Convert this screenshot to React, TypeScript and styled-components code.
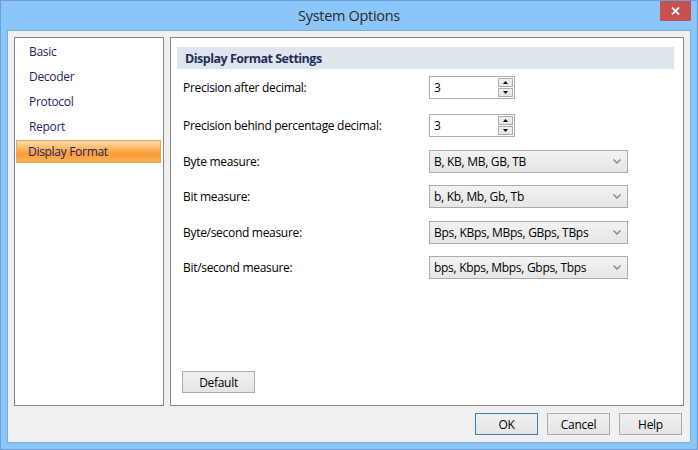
import React from "react";
import styled, { createGlobalStyle } from "styled-components";

const FONT = `"Segoe UI", "Open Sans", "Noto Sans", sans-serif`;

const GlobalStyle = createGlobalStyle`
  html, body {
    margin: 0;
    padding: 0;
    background: #ffffff;
  }
  body {
    font-family: ${FONT};
    font-size: 12px;
    letter-spacing: -0.3px;
  }
`;

const categories = ["Basic", "Decoder", "Protocol", "Report", "Display Format"];

const settings = [
  { label: "Precision after decimal:", kind: "spin", value: "3" },
  { label: "Precision behind percentage decimal:", kind: "spin", value: "3" },
  { label: "Byte measure:", kind: "combo", value: "B, KB, MB, GB, TB" },
  { label: "Bit measure:", kind: "combo", value: "b, Kb, Mb, Gb, Tb" },
  { label: "Byte/second measure:", kind: "combo", value: "Bps, KBps, MBps, GBps, TBps" },
  { label: "Bit/second measure:", kind: "combo", value: "bps, Kbps, Mbps, Gbps, Tbps" },
];

export default function App() {
  return (
    <>
      <GlobalStyle />
      <Window>
        <TitleBar>
          <Title>System Options</Title>
          <CloseButton>
            <svg width="9" height="8" viewBox="0 0 9 8">
              <path d="M1 0.5 L8 7.5 M8 0.5 L1 7.5" stroke="#fff" strokeWidth="1.8" />
            </svg>
          </CloseButton>
        </TitleBar>
        <Client>
          <Panels>
            <CategoryList>
              {categories.map((c) => (
                <CategoryItem key={c} $active={c === "Display Format"}>
                  {c}
                </CategoryItem>
              ))}
            </CategoryList>
            <SettingsPanel>
              <SectionHeader>Display Format Settings</SectionHeader>
              <Rows>
                {settings.map((s, i) => (
                  <Row key={s.label} $extra={i === 0}>
                    <Label>{s.label}</Label>
                    {s.kind === "spin" ? (
                      <SpinBox>
                        <SpinValue>{s.value}</SpinValue>
                        <SpinButtons>
                          <SpinButton>
                            <svg width="5" height="3" viewBox="0 0 5 3">
                              <path d="M2.5 0 L5 3 L0 3 Z" fill="#000" />
                            </svg>
                          </SpinButton>
                          <SpinButton>
                            <svg width="5" height="3" viewBox="0 0 5 3">
                              <path d="M0 0 L5 0 L2.5 3 Z" fill="#000" />
                            </svg>
                          </SpinButton>
                        </SpinButtons>
                      </SpinBox>
                    ) : (
                      <Combo>
                        <ComboText>{s.value}</ComboText>
                        <svg width="8" height="5" viewBox="0 0 8 5">
                          <path d="M0.5 0.5 L4 4 L7.5 0.5" stroke="#8a8a8a" strokeWidth="1.5" fill="none" />
                        </svg>
                      </Combo>
                    )}
                  </Row>
                ))}
              </Rows>
              <Footer>
                <Button $width={73}>Default</Button>
              </Footer>
            </SettingsPanel>
          </Panels>
          <ButtonRow>
            <Button $width={63} $default>OK</Button>
            <Button $width={63}>Cancel</Button>
            <Button $width={63}>Help</Button>
          </ButtonRow>
        </Client>
      </Window>
    </>
  );
}

const Window = styled.div`
  width: 698px;
  height: 450px;
  box-sizing: border-box;
  border: 1px solid #6c9fd4;
  background: #8cc6f8;
  display: flex;
  flex-direction: column;
`;

const TitleBar = styled.div`
  height: 29px;
  position: relative;
  display: flex;
  align-items: center;
  justify-content: center;
`;

const Title = styled.div`
  font-family: ${FONT};
  font-size: 14.5px;
  letter-spacing: -0.3px;
  color: #2b2b2b;
  margin-top: -1px;
`;

const CloseButton = styled.div`
  position: absolute;
  top: 0;
  right: 6px;
  width: 31px;
  height: 20px;
  background: #c75050;
  display: flex;
  align-items: center;
  justify-content: center;
`;

const Client = styled.div`
  flex: 1;
  margin: 0 6px 6px 6px;
  border: 1px solid #78acdf;
  background: #f0f0f0;
  display: flex;
  flex-direction: column;
  padding: 6px 6px 7px 6px;
`;

const Panels = styled.div`
  height: 369px;
  display: flex;
  gap: 6px;
`;

const CategoryList = styled.div`
  width: 150px;
  box-sizing: border-box;
  border: 1px solid #828790;
  background: #ffffff;
  padding: 1px 2px 0 1px;
  display: flex;
  flex-direction: column;
`;

const CategoryItem = styled.div<{ $active?: boolean }>`
  height: 25px;
  box-sizing: border-box;
  display: flex;
  align-items: center;
  padding-left: 12px;
  font-family: ${FONT};
  font-size: 12px;
  color: #1b1f66;
  border: 1px solid ${(p) => (p.$active ? "#e7a75a" : "transparent")};
  background: ${(p) =>
    p.$active
      ? "linear-gradient(to bottom, #fdd9ad 0%, #fbb863 35%, #f99b34 62%, #fbb35a 100%)"
      : "transparent"};
  background-clip: padding-box;
  ${(p) => (p.$active ? "margin: 1px 0; height: 23px; padding-left: 11px;" : "")}
`;

const SettingsPanel = styled.div`
  flex: 1;
  box-sizing: border-box;
  border: 1px solid #828790;
  background: #ffffff;
  display: flex;
  flex-direction: column;
  padding: 9px 9px 12px 6px;
`;

const SectionHeader = styled.div`
  height: 22px;
  background: #dde5ed;
  display: flex;
  align-items: center;
  padding-left: 8px;
  font-family: ${FONT};
  font-size: 12.5px;
  letter-spacing: -0.5px;
  font-weight: bold;
  color: #1f2f5c;
`;

const Rows = styled.div`
  display: flex;
  flex-direction: column;
  gap: 12.5px;
  margin-top: 7px;
`;

const Row = styled.div<{ $extra?: boolean }>`
  display: grid;
  grid-template-columns: 246px auto;
  align-items: center;
  height: 23px;
  padding-left: 6px;
  margin-bottom: ${(p) => (p.$extra ? "2.5px" : "0")};
`;

const Label = styled.div`
  font-family: ${FONT};
  font-size: 12px;
  color: #000000;
  white-space: nowrap;
`;

const SpinBox = styled.div`
  width: 86px;
  height: 23px;
  box-sizing: border-box;
  border: 1px solid #abadb3;
  background: #ffffff;
  display: flex;
  align-items: center;
  justify-content: space-between;
  padding: 0 1px 0 4px;
`;

const SpinValue = styled.span`
  font-family: ${FONT};
  font-size: 12px;
  color: #000000;
`;

const SpinButtons = styled.div`
  display: flex;
  flex-direction: column;
  gap: 1px;
`;

const SpinButton = styled.div`
  width: 15px;
  height: 9px;
  box-sizing: border-box;
  border: 1px solid #acacac;
  background: linear-gradient(to bottom, #f2f2f2, #e5e5e5);
  display: flex;
  align-items: center;
  justify-content: center;
`;

const Combo = styled.div`
  width: 199px;
  height: 23px;
  box-sizing: border-box;
  border: 1px solid #acacac;
  background: linear-gradient(to bottom, #f2f2f2, #e6e6e6);
  display: flex;
  align-items: center;
  justify-content: space-between;
  padding: 0 6px 0 4px;
`;

const ComboText = styled.span`
  font-family: ${FONT};
  font-size: 12px;
  color: #000000;
  white-space: nowrap;
`;

const Footer = styled.div`
  margin-top: auto;
  padding-left: 5px;
`;

const Button = styled.div<{ $width: number; $default?: boolean }>`
  width: ${(p) => p.$width}px;
  height: 22px;
  box-sizing: border-box;
  border: 1px solid ${(p) => (p.$default ? "#3c7fb1" : "#acacac")};
  background: linear-gradient(to bottom, #f0f0f0, #e5e5e5);
  display: flex;
  align-items: center;
  justify-content: center;
  font-family: ${FONT};
  font-size: 12px;
  color: #000000;
`;

const ButtonRow = styled.div`
  margin-top: auto;
  display: flex;
  justify-content: flex-end;
  gap: 9px;
  padding-right: 2px;
`;
